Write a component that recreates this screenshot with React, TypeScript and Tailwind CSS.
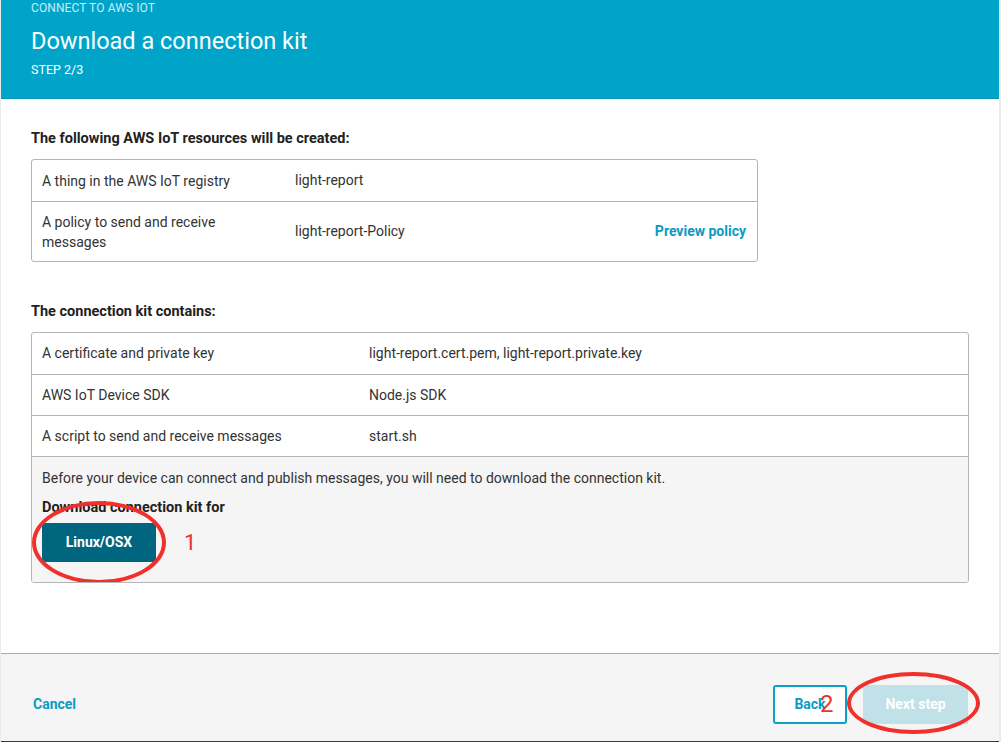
import React from 'react';

const font = { fontFamily: 'Roboto, "Open Sans", Arial, sans-serif' };

interface Row {
  label: React.ReactNode;
  value: string;
  action?: string;
}

const resources: Row[] = [
  { label: 'A thing in the AWS IoT registry', value: 'light-report' },
  {
    label: (
      <>
        A policy to send and receive
        <br />
        messages
      </>
    ),
    value: 'light-report-Policy',
    action: 'Preview policy',
  },
];

const kit: Row[] = [
  { label: 'A certificate and private key', value: 'light-report.cert.pem, light-report.private.key' },
  { label: 'AWS IoT Device SDK', value: 'Node.js SDK' },
  { label: 'A script to send and receive messages', value: 'start.sh' },
];

export default function App() {
  return (
    <div className="w-[1001px] h-[742px] bg-[#ebebeb] flex flex-col overflow-hidden" style={font}>
      <div className="ml-[1px] mr-[2px] flex-1 flex flex-col bg-white border-b border-[#3a3a3a]">
        {/* header */}
        <header className="h-[99px] bg-[#00a4c9] pl-[30px] pt-[1px] border-b border-[#0a95b8]">
          <div className="text-[12px] leading-[14px] text-[#c9eef7] tracking-[0.1px]">CONNECT TO AWS IOT</div>
          <h1 className="mt-[11px] text-[23.5px] leading-[30px] text-white">Download a connection kit</h1>
          <div className="mt-[7px] text-[12.5px] leading-[14px] text-white">STEP 2/3</div>
        </header>

        {/* body */}
        <main className="flex-1 pl-[30px] pr-[30px] pt-[31px] text-[14px] text-[#333]">
          <h2 className="font-bold text-[14.5px] leading-[18px] text-[#222]">The following AWS IoT resources will be created:</h2>
          <div className="mt-[11px] w-[727px] border border-[#b5b5b5] rounded-[3px]">
            {resources.map((r, i) => (
              <div
                key={i}
                className={`flex items-center px-[10px] ${i === 0 ? 'h-[41px]' : 'h-[60px] border-t border-[#b5b5b5]'}`}
              >
                <div className="w-[253px] leading-[20px]">{r.label}</div>
                <div className="flex-1">{r.value}</div>
                {r.action && <a className="font-bold text-[#0a9bc3] mr-[1px]">{r.action}</a>}
              </div>
            ))}
          </div>

          <h2 className="mt-[41px] font-bold text-[14.5px] leading-[18px] text-[#222]">The connection kit contains:</h2>
          <div className="mt-[11px] w-[938px] border border-[#b5b5b5] rounded-[3px] overflow-hidden">
            {kit.map((r, i) => (
              <div key={i} className={`flex items-center h-[41px] px-[10px] ${i > 0 ? 'border-t border-[#b5b5b5]' : ''}`}>
                <div className="w-[327px]">{r.label}</div>
                <div className="flex-1">{r.value}</div>
              </div>
            ))}
            <div className="border-t border-[#b5b5b5] bg-[#f5f5f5] px-[10px] pt-[11px] h-[126px]">
              <p className="leading-[20px]">
                Before your device can connect and publish messages, you will need to download the connection kit.
              </p>
              <p className="mt-[10px] font-bold text-[14.5px] leading-[20px] text-[#222]">Download connection kit for</p>
              <div className="relative mt-[5px] flex items-center">
                <button className="w-[114px] h-[39px] bg-[#00667f] text-white font-bold text-[14px]">Linux/OSX</button>
                <span className="ml-[28px] text-[22px] leading-none text-[#f0302a]">1</span>
                <span className="absolute left-[-10px] top-[-22px] w-[134px] h-[83px] rounded-[50%] border-4 border-[#f0302a]" />
              </div>
            </div>
          </div>
        </main>

        {/* footer */}
        <footer className="h-[88px] bg-[#f5f5f5] border-t border-[#ababab] flex items-center pl-[32px] pr-[31px] pt-[14px]">
          <a className="font-bold text-[14px] text-[#0a9bc3]">Cancel</a>
          <div className="ml-auto flex items-center gap-[16px] relative">
            <button className="relative w-[74px] h-[39px] border-2 border-[#0aa0c8] rounded-[3px] bg-white text-[#0a9bc3] font-bold text-[14px]">
              Back
              <span className="absolute left-[45px] top-[5px] text-[24px] leading-none font-normal text-[#f0302a]">2</span>
            </button>
            <button className="w-[105px] h-[39px] bg-[#c1e1e8] text-white font-bold text-[14px]">Next step</button>
            <span className="absolute right-[-12px] top-[-13px] w-[133px] h-[62px] rounded-[50%] border-4 border-[#f0302a]" />
          </div>
        </footer>
      </div>
    </div>
  );
}
